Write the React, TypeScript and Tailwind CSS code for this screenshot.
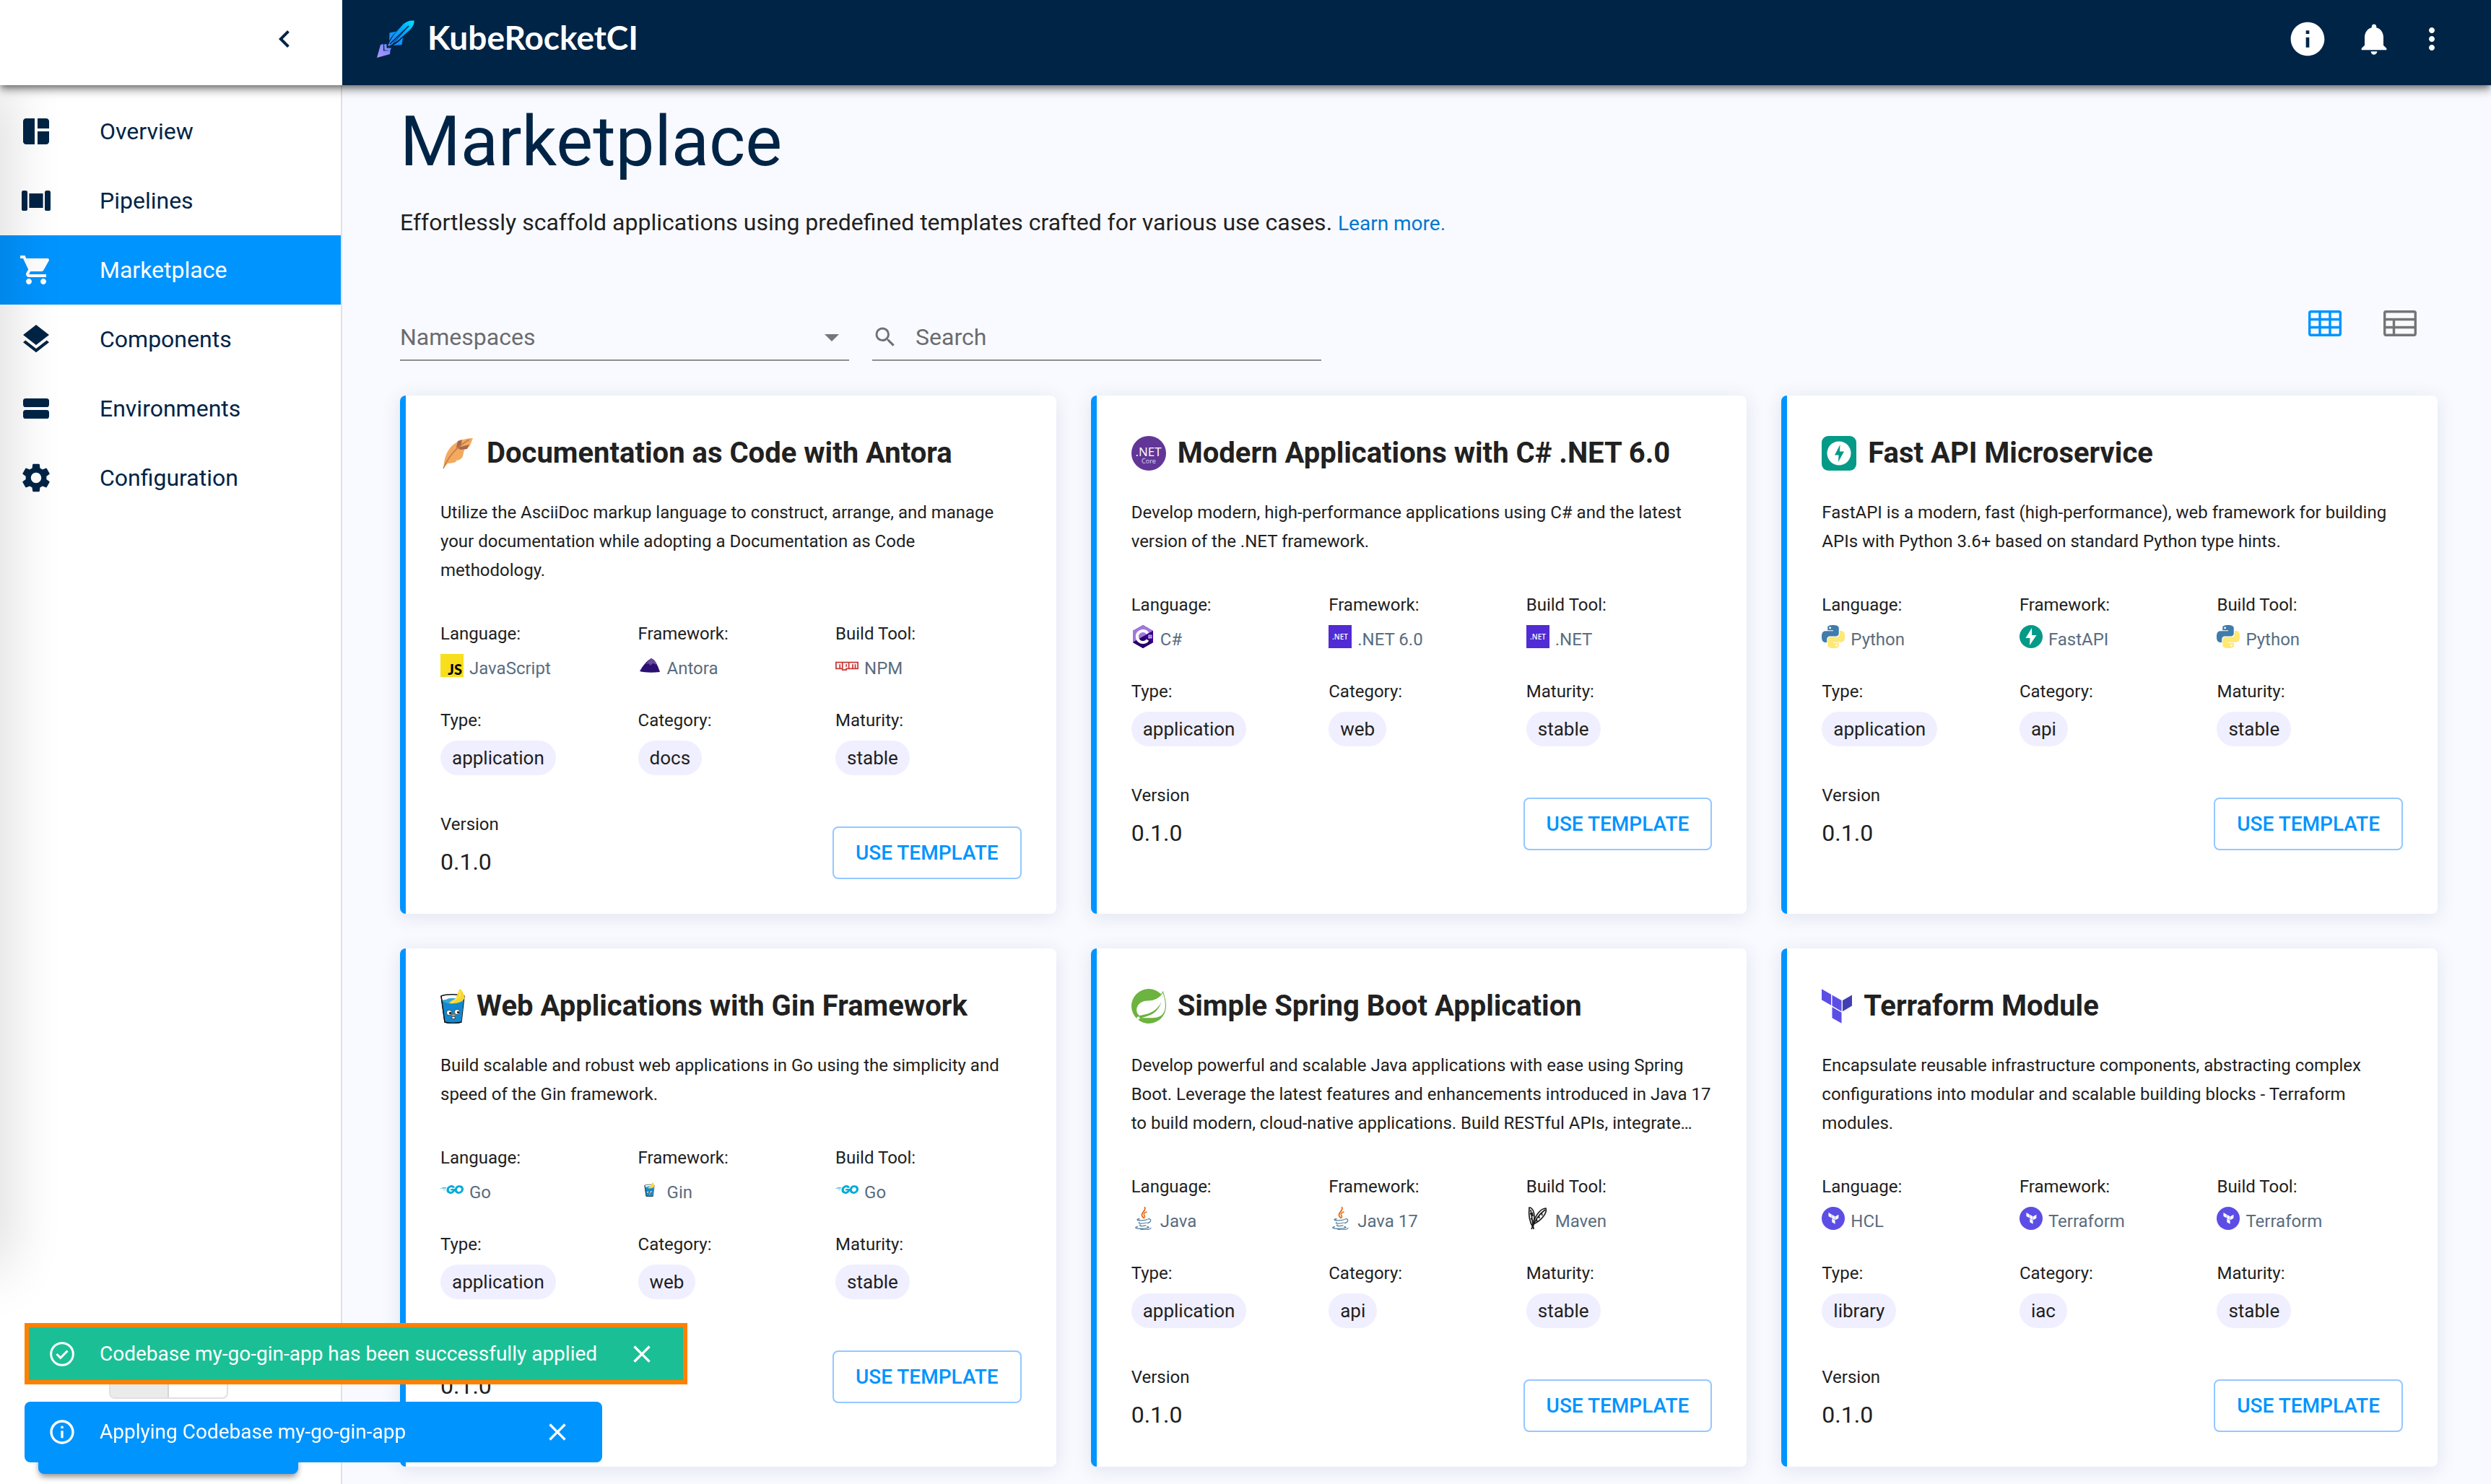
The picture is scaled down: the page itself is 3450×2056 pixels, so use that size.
import type { ReactNode } from "react";
import {
  MdInfo,
  MdNotifications,
  MdMoreVert,
  MdShoppingCart,
  MdSettings,
  MdSearch,
  MdArrowDropDown,
  MdClose,
  MdOutlineInfo,
  MdKeyboardArrowLeft,
} from "react-icons/md";
import { SiGo, SiSpring } from "react-icons/si";
import { FaNpm } from "react-icons/fa";

const TERRAFORM_PATH =
  "M1.44 0v7.575l6.561 3.79V3.787zM8.72 4.23v7.575l6.561 3.787V8.018zm0 8.405v7.575L15.28 24v-7.578z";

function RocketLogo() {
  return (
    <svg className="size-[52px]" viewBox="0 0 52 52" aria-hidden="true">
      <defs>
        <linearGradient id="rocket" x1="0" y1="52" x2="52" y2="0" gradientUnits="userSpaceOnUse">
          <stop offset="0" stopColor="#b794f6" />
          <stop offset="0.28" stopColor="#7a8cff" />
          <stop offset="0.42" stopColor="#1a8cff" />
          <stop offset="0.7" stopColor="#00a6ff" />
          <stop offset="1" stopColor="#00e5ff" />
        </linearGradient>
      </defs>
      <g fill="url(#rocket)">
        <path d="M51.500 0.500C45 0 40 2 36 6L27 16C22 22 18 28 15.500 35L16.500 36C24 32 31 27 36 22L45 14C50 9 52 5 51.500 0.500Z" />
        <path d="M17.500 17.500L27 15.500C23 19.500 19.500 24 17 28.500Z" />
        <path d="M35 25L36 24.500L34.500 34L22.500 35C27 32 31.500 29 35 25Z" />
        <path d="M5 34L9 33V42.500L18.500 42L18 47L0 52Z" />
        <path d="M10 33.500L13.500 33V38.500L20 38.500L18.500 42L10.500 41.500Z" />
      </g>
      <path d="M44 8L18 33" stroke="#002446" strokeWidth="1.600" fill="none" />
      <path d="M42 10L22 33" stroke="#002446" strokeWidth="1" fill="none" />
    </svg>
  );
}

function OverviewIcon() {
  return (
    <svg viewBox="0 0 24 24" className="size-12" fill="currentColor" aria-hidden="true">
      <path d="M11 21H5c-1.100 0-2-.9-2-2V5c0-1.100.9-2 2-2h6v18zM13 21h6c1.100 0 2-.9 2-2v-7h-8v9zM21 10V5c0-1.100-.9-2-2-2h-6v7h8z" />
    </svg>
  );
}

function PipelinesIcon() {
  return (
    <svg viewBox="0 0 24 24" className="size-12" fill="currentColor" aria-hidden="true">
      <rect x="2" y="5" width="4" height="14" rx="1.300" />
      <rect x="7.200" y="7" width="9.600" height="10" />
      <rect x="18" y="5" width="4" height="14" rx="1.300" />
    </svg>
  );
}

function ComponentsIcon() {
  return (
    <svg viewBox="0 0 24 24" className="size-12" fill="currentColor" aria-hidden="true">
      <path d="M11.990 18.540l-7.370-5.730L3 14.070l9 7 9-7-1.630-1.270-7.380 5.740zM12 16l7.360-5.730L21 9l-9-7-9 7 1.630 1.270L12 16z" />
    </svg>
  );
}

function EnvironmentsIcon() {
  return (
    <svg viewBox="0 0 24 24" className="size-12" fill="currentColor" aria-hidden="true">
      <rect x="3" y="5" width="18" height="6" rx="1.800" />
      <rect x="3" y="13" width="18" height="6" rx="1.800" />
    </svg>
  );
}

function GridViewIcon() {
  return (
    <svg viewBox="0 0 46 36" className="h-9 w-[46px]" fill="none" stroke="currentColor" strokeWidth="3.400" aria-hidden="true">
      <rect x="1.700" y="1.700" width="42.600" height="32.600" rx="2" />
      <path d="M1.500 12.500H44.500M1.500 23.500H44.500M16 1.500V34.500M30 1.500V34.500" />
    </svg>
  );
}

function TableViewIcon() {
  return (
    <svg viewBox="0 0 46 36" className="h-9 w-[46px]" fill="none" stroke="currentColor" strokeWidth="3.400" aria-hidden="true">
      <rect x="1.700" y="1.700" width="42.600" height="32.600" rx="2" />
      <path d="M1.500 12.500H44.500M1.500 23.500H44.500M14.500 12.500V34.500" />
    </svg>
  );
}

function FeatherIcon() {
  return (
    <svg viewBox="0 0 48 48" className="size-12" aria-hidden="true">
      <path d="M45 3C33 3 20 8 13 17C7 25 5 33 4.500 44L10 38C15 38 20 37 23 35L20 34C26 34 29 32 31 28L33 19C36 18 39 16 41 13Z" fill="#f3aa60" />
      <path d="M24 7L30 5L28 15L40 12L37 18L28 19L22 16Z" fill="#a9674a" />
      <path d="M40 5C24 14 12 26 4 45" stroke="#c27c48" strokeWidth="1.500" fill="none" />
    </svg>
  );
}

function GinGlass({ className }: { className: string }) {
  return (
    <svg viewBox="0 0 34 48" className={className} aria-hidden="true">
      <path d="M1 10C8 7 25 7 33 10L29 46C22 48 12 48 6 46Z" fill="#fff" stroke="#111" strokeWidth="1.400" />
      <path d="M2 16C10 14 24 14 32 15L29 46C22 48 12 48 6 46Z" fill="#1288cf" />
      <path d="M3 17C10 22 24 22 31 17L31.500 13H12Z" fill="#35a7d8" />
      <path d="M12 20C15 15 19 16 22 12C24 6 25 3 27 0C31 3 33 8 33.500 13C31 18 22 21 12 20Z" fill="#fbd52a" />
      <path d="M15 19C20 18 21 13 26 12M27 3V11" stroke="#fff3a0" strokeWidth="1" fill="none" />
      <path d="M1 10L6 46C12 48 22 48 29 46" fill="none" stroke="#111" strokeWidth="1.400" />
      <circle cx="12" cy="33" r="3.600" fill="#fff" stroke="#111" strokeWidth=".6" />
      <circle cx="23" cy="32" r="3.600" fill="#fff" stroke="#111" strokeWidth=".6" />
      <circle cx="13.500" cy="33.500" r="1.500" />
      <circle cx="24.500" cy="32.500" r="1.500" />
      <ellipse cx="18" cy="36.500" rx="2.600" ry="1.600" fill="#c98a4b" />
      <path d="M16 38.500h4v3h-4z" fill="#fff" stroke="#111" strokeWidth=".6" />
    </svg>
  );
}

function NetCoreIcon() {
  return (
    <svg viewBox="0 0 48 48" className="size-12" aria-hidden="true">
      <circle cx="24" cy="24" r="24" fill="#623697" />
      <text x="23.500" y="28" fill="#fff" fontFamily="Open Sans, sans-serif" fontSize="17" textAnchor="middle">.NET</text>
      <text x="24" y="38" fill="#e5d9f3" fontFamily="Open Sans, sans-serif" fontSize="9" textAnchor="middle">Core</text>
    </svg>
  );
}

function FastApiTile() {
  return (
    <svg viewBox="0 0 48 48" className="size-12" aria-hidden="true">
      <rect width="48" height="48" rx="9" fill="#059a87" />
      <circle cx="24" cy="24" r="16.500" fill="#fff" />
      <path d="M25.500 12L18 26.500h5.500L23 36l8-14.500h-6z" fill="#059a87" />
    </svg>
  );
}

function FastApiIcon() {
  return (
    <svg viewBox="0 0 32 32" className="size-8" aria-hidden="true">
      <circle cx="16" cy="16" r="16" fill="#059a87" />
      <path d="M17 4L8.500 18h6L14 28l9.500-14h-6.300z" fill="#fff" />
    </svg>
  );
}

function TerraformTile() {
  return (
    <svg viewBox="1.440 0 21.120 24" className="h-12 w-[42px]" aria-hidden="true">
      <path d={TERRAFORM_PATH} fill="#5c4ee5" />
      <path d="M22.560 4.227l-6.561 3.791v7.574l6.560-3.787z" fill="#4040b2" />
    </svg>
  );
}

function TerraformIcon() {
  return (
    <svg viewBox="0 0 32 32" className="size-8" aria-hidden="true">
      <circle cx="16" cy="16" r="16" fill="#5c4ee5" />
      <g transform="translate(8.500 8) scale(.66)" fill="#fff">
        <path d={TERRAFORM_PATH} />
        <path d="M22.560 4.227l-6.561 3.791v7.574l6.560-3.787z" />
      </g>
    </svg>
  );
}

function JavaScriptIcon() {
  return (
    <svg viewBox="0 0 32 32" className="size-8" aria-hidden="true">
      <rect width="32" height="32" fill="#f7df1e" />
      <text x="30" y="29" textAnchor="end" fontFamily="Lato, sans-serif" fontWeight="900" fontSize="20">JS</text>
    </svg>
  );
}

function AntoraIcon() {
  return (
    <svg viewBox="0 0 32 32" className="size-8" aria-hidden="true">
      <path d="M2 24C6 17 11 10 18 6C21 7 24 10 26 15C28 19 29 22 30 25C20 26 9 26 2 24Z" fill="#2c0f72" />
      <path d="M10 14L18 6C21 8 24 11 26 15L20 13L17 16L14 13Z" fill="#6a4a9c" />
    </svg>
  );
}

function NpmIcon() {
  return <FaNpm className="size-8 text-[#cb3837]" aria-hidden="true" />;
}

function CSharpIcon() {
  return (
    <svg viewBox="0 0 32 32" className="size-8" aria-hidden="true">
      <path d="M16 0L30 8V24L16 32L2 24V8Z" fill="#280068" />
      <path d="M16 0L30 8L2 24V8Z" fill="#a179dc" />
      <path d="M2 24L16 16L30 24L16 32Z" fill="#280068" />
      <path d="M30 8V24L16 16Z" fill="#390091" />
      <path d="M22.500 11.500A8 8 0 1 0 22.500 20.500" fill="none" stroke="#fff" strokeWidth="4" />
      <path d="M24.500 13v6M27 13v6M23 15h6M23 17.300h6" stroke="#fff" strokeWidth=".8" />
    </svg>
  );
}

function DotNetIcon() {
  return (
    <svg viewBox="0 0 32 32" className="size-8" aria-hidden="true">
      <rect width="32" height="32" fill="#512bd4" />
      <text x="16" y="20" fill="#fff" fontFamily="Open Sans, sans-serif" fontWeight="600" fontSize="10" textAnchor="middle">.NET</text>
    </svg>
  );
}

function PythonIcon() {
  return (
    <svg viewBox="0 0 24 24" className="size-8" aria-hidden="true">
      <path
        fill="#3f7cac"
        d="M14.25.18l.9.2.73.26.59.3.45.32.34.34.25.34.16.33.1.3.04.26.02.2-.01.13V8.5l-.05.63-.13.55-.21.46-.26.38-.3.31-.33.25-.35.19-.35.14-.33.1-.3.07-.26.04-.21.02H8.77l-.69.05-.59.14-.5.22-.41.27-.33.32-.27.35-.2.36-.15.37-.1.35-.07.32-.04.27-.02.21v3.06H3.17l-.21-.03-.28-.07-.32-.12-.35-.18-.36-.26-.36-.36-.35-.46-.32-.59-.28-.73-.21-.88-.14-1.05-.05-1.23.06-1.22.16-1.04.24-.87.32-.71.36-.57.4-.44.42-.33.42-.24.4-.16.36-.1.32-.05.24-.01h.16l.06.01h8.16v-.83H6.18l-.01-2.75-.02-.37.05-.34.11-.31.17-.28.25-.26.31-.23.38-.2.44-.18.51-.15.58-.12.64-.1.71-.06.77-.04.84-.02 1.27.05zm-6.3 1.98l-.23.33-.08.41.08.41.23.34.33.22.41.09.41-.09.33-.22.23-.34.08-.41-.08-.41-.23-.33-.33-.22-.41-.09-.41.09z"
      />
      <path
        fill="#ffe873"
        d="M21.1 6.11l.28.06.32.12.35.18.36.27.36.35.35.47.32.59.28.73.21.88.14 1.04.05 1.23-.06 1.23-.16 1.04-.24.86-.32.71-.36.57-.4.45-.42.33-.42.24-.4.16-.36.09-.32.05-.24.02-.16-.01h-8.22v.82h5.84l.01 2.76.02.36-.05.34-.11.31-.17.29-.25.25-.31.24-.38.2-.44.17-.51.15-.58.13-.64.09-.71.07-.77.04-.84.01-1.27-.04-1.07-.14-.9-.2-.73-.25-.59-.3-.45-.33-.34-.34-.25-.34-.16-.33-.1-.3-.04-.25-.02-.2.01-.13v-5.34l.05-.64.13-.54.21-.46.26-.38.3-.32.33-.24.35-.2.35-.14.33-.1.3-.06.26-.04.21-.02.13-.01h5.84l.69-.05.59-.14.5-.21.41-.28.33-.32.27-.35.2-.36.15-.36.1-.35.07-.32.04-.28.02-.21V6.07h2.09l.14.01zm-6.47 14.25l-.23.33-.08.41.08.41.23.33.33.23.41.08.41-.08.33-.23.23-.33.08-.41-.08-.41-.23-.33-.33-.23-.41-.08-.41.08z"
      />
    </svg>
  );
}

function JavaIcon() {
  return (
    <svg viewBox="0 0 32 32" className="size-8" fill="none" strokeLinecap="round" aria-hidden="true">
      <path d="M18.500 0.500C21 6 12 8 15 13C15.500 14 16.500 15 16.500 15" stroke="#ea6a12" strokeWidth="1.800" />
      <path d="M21 7C17 8.500 16.500 10 18 12C19 13.500 18.500 14.500 17.500 15.500" stroke="#ea6a12" strokeWidth="1.500" />
      <g stroke="#5382a1" strokeWidth="1.300">
        <path d="M11 16.500C5 18 9 19 14 18.800C18 18.700 21 18 22 17.500" />
        <path d="M23 17C28 15.500 28 21 22.500 22.500" />
        <path d="M11 21.500C8.500 23 14 24 21 22" />
        <path d="M12 25C10 26.500 15 27.300 20 25.700" />
        <path d="M8.500 27.500C2 29 8 30.500 15 30.200C22 30 27 28.500 22 27.500" />
        <path d="M13 31.500C19 32 26 31.500 27 29.500" />
      </g>
    </svg>
  );
}

function MavenIcon() {
  return (
    <svg viewBox="0 0 32 32" className="size-8" fill="none" stroke="#1b1b1b" strokeWidth="1.700" aria-hidden="true">
      <path d="M9 28C4 20 3 10 4 1C9 1 11 8 11 14C11 19 10 23 9 28Z" />
      <path d="M6 4L10 31M5 9l3 3M8 8l1 5M6 16l3 3" />
      <path d="M9 24C12 12 20 2 27 2C29 8 22 18 10 24Z" />
      <path d="M26 4C18 10 11 20 7 31M17 12l1 4M21 8l1 4M14 17l1 4" />
    </svg>
  );
}

function GoIcon() {
  return <SiGo className="size-8 text-[#00acd7]" aria-hidden="true" />;
}

function GinIcon() {
  return (
    <span className="flex size-8 items-center justify-center">
      <GinGlass className="h-5 w-[15px]" />
    </span>
  );
}

type Stack = { name: string; icon: ReactNode };

type Template = {
  title: string;
  icon: ReactNode;
  description: string;
  language: Stack;
  framework: Stack;
  buildTool: Stack;
  type: string;
  category: string;
  maturity: string;
};

const templates: Template[] = [
  {
    title: "Documentation as Code with Antora",
    icon: <FeatherIcon />,
    description:
      "Utilize the AsciiDoc markup language to construct, arrange, and manage your documentation while adopting a Documentation as Code methodology.",
    language: { name: "JavaScript", icon: <JavaScriptIcon /> },
    framework: { name: "Antora", icon: <AntoraIcon /> },
    buildTool: { name: "NPM", icon: <NpmIcon /> },
    type: "application",
    category: "docs",
    maturity: "stable",
  },
  {
    title: "Modern Applications with C# .NET 6.0",
    icon: <NetCoreIcon />,
    description:
      "Develop modern, high-performance applications using C# and the latest version of the .NET framework.",
    language: { name: "C#", icon: <CSharpIcon /> },
    framework: { name: ".NET 6.0", icon: <DotNetIcon /> },
    buildTool: { name: ".NET", icon: <DotNetIcon /> },
    type: "application",
    category: "web",
    maturity: "stable",
  },
  {
    title: "Fast API Microservice",
    icon: <FastApiTile />,
    description:
      "FastAPI is a modern, fast (high-performance), web framework for building APIs with Python 3.6+ based on standard Python type hints.",
    language: { name: "Python", icon: <PythonIcon /> },
    framework: { name: "FastAPI", icon: <FastApiIcon /> },
    buildTool: { name: "Python", icon: <PythonIcon /> },
    type: "application",
    category: "api",
    maturity: "stable",
  },
  {
    title: "Web Applications with Gin Framework",
    icon: <GinGlass className="h-12 w-[34px]" />,
    description:
      "Build scalable and robust web applications in Go using the simplicity and speed of the Gin framework.",
    language: { name: "Go", icon: <GoIcon /> },
    framework: { name: "Gin", icon: <GinIcon /> },
    buildTool: { name: "Go", icon: <GoIcon /> },
    type: "application",
    category: "web",
    maturity: "stable",
  },
  {
    title: "Simple Spring Boot Application",
    icon: <SiSpring className="size-12 text-[#6db33f]" aria-hidden="true" />,
    description:
      "Develop powerful and scalable Java applications with ease using Spring Boot. Leverage the latest features and enhancements introduced in Java 17 to build modern, cloud-native applications. Build RESTful APIs, integrate…",
    language: { name: "Java", icon: <JavaIcon /> },
    framework: { name: "Java 17", icon: <JavaIcon /> },
    buildTool: { name: "Maven", icon: <MavenIcon /> },
    type: "application",
    category: "api",
    maturity: "stable",
  },
  {
    title: "Terraform Module",
    icon: <TerraformTile />,
    description:
      "Encapsulate reusable infrastructure components, abstracting complex configurations into modular and scalable building blocks - Terraform modules.",
    language: { name: "HCL", icon: <TerraformIcon /> },
    framework: { name: "Terraform", icon: <TerraformIcon /> },
    buildTool: { name: "Terraform", icon: <TerraformIcon /> },
    type: "library",
    category: "iac",
    maturity: "stable",
  },
];

const navItems = [
  { label: "Overview", icon: <OverviewIcon /> },
  { label: "Pipelines", icon: <PipelinesIcon /> },
  { label: "Marketplace", icon: <MdShoppingCart className="size-12" aria-hidden="true" />, active: true },
  { label: "Components", icon: <ComponentsIcon /> },
  { label: "Environments", icon: <EnvironmentsIcon /> },
  { label: "Configuration", icon: <MdSettings className="size-12" aria-hidden="true" /> },
];

function StackField({ label, value }: { label: string; value: Stack }) {
  return (
    <div className="flex flex-col gap-2">
      <dt>{label}:</dt>
      <dd className="flex items-start gap-2 text-[#596d80]">
        {value.icon}
        <span>{value.name}</span>
      </dd>
    </div>
  );
}

function ChipField({ label, value }: { label: string; value: string }) {
  return (
    <div className="flex flex-col items-start gap-2">
      <dt>{label}:</dt>
      <dd className="flex h-12 items-center rounded-full bg-[#f0efff] px-4 text-[26px]">{value}</dd>
    </div>
  );
}

function TemplateCard({ template }: { template: Template }) {
  return (
    <article className="rounded-lg border-l-8 border-[#0094ff] bg-white p-12 text-[24px] leading-10 text-[#212121] shadow-[0_4px_24px_2px_rgba(40,60,130,0.10)]">
      <div className="flex h-16 items-center gap-4">
        {template.icon}
        <h2 className="text-[40px] font-bold leading-[64px] whitespace-nowrap">{template.title}</h2>
      </div>
      <p className="mt-[30px]">{template.description}</p>
      <dl className="mt-12 grid grid-cols-3 gap-x-4 gap-y-8">
        <StackField label="Language" value={template.language} />
        <StackField label="Framework" value={template.framework} />
        <StackField label="Build Tool" value={template.buildTool} />
        <ChipField label="Type" value={template.type} />
        <ChipField label="Category" value={template.category} />
        <ChipField label="Maturity" value={template.maturity} />
      </dl>
      <div className="mt-12 flex items-end justify-between">
        <div>
          <p>Version</p>
          <p className="mt-2 text-[32px] leading-[48px]">0.1.0</p>
        </div>
        <button
          type="button"
          className="rounded-lg border-2 border-[#94c8ff] px-[30px] py-[10px] text-[28px] font-medium leading-[49px] text-[#0094ff]"
        >
          USE TEMPLATE
        </button>
      </div>
    </article>
  );
}

function Sidebar() {
  return (
    <aside className="relative flex w-[474px] shrink-0 flex-col overflow-hidden border-r-2 border-[#e0e0e5] bg-white">
      <nav className="pt-4" aria-label="Main">
        {navItems.map((item) => (
          <a
            key={item.label}
            href="#"
            aria-current={item.active ? "page" : undefined}
            className={
              item.active
                ? "flex h-24 items-center gap-16 bg-[#0094ff] px-[26px] text-[32px] text-white"
                : "flex h-24 items-center gap-16 px-[26px] text-[32px] text-[#002446]"
            }
          >
            {item.icon}
            {item.label}
          </a>
        ))}
      </nav>
      <div className="mt-auto flex flex-col items-center gap-8 pr-[59px] pb-[14px] pl-[53px]">
        <div className="flex h-14 w-[165px] overflow-hidden rounded-lg border-2 border-[#e0e0e0]">
          <button type="button" aria-label="Light theme" className="flex-1 border-r-2 border-[#d5d5d5] bg-[#ebebeb]" />
          <button type="button" aria-label="Dark theme" className="flex-1" />
        </div>
        <button
          type="button"
          aria-label="Add cluster"
          className="h-[72px] w-full rounded-lg bg-[#0094ff] shadow-[0_6px_8px_-2px_rgba(0,0,0,0.35),0_2px_10px_rgba(0,0,0,0.15)]"
        />
      </div>
      <div
        className="pointer-events-none absolute top-0 bottom-[300px] -left-10 w-10 shadow-[0_0_80px_rgba(0,0,0,0.24)]"
        aria-hidden="true"
      />
    </aside>
  );
}

function Header() {
  return (
    <header className="relative z-10 flex h-[118px] shadow-[0_4px_8px_-2px_rgba(0,0,0,0.4),0_8px_10px_rgba(0,0,0,0.2),0_2px_20px_rgba(0,0,0,0.2)]">
      <div className="flex w-[474px] shrink-0 items-start justify-end bg-white pt-[30px] pr-14 text-[#002446]">
        <button type="button" aria-label="Collapse menu">
          <MdKeyboardArrowLeft className="size-12" />
        </button>
      </div>
      <div className="flex flex-1 items-start justify-between bg-[#002446] pt-[26px] pr-[58px] pl-12 text-white">
        <a href="#" className="flex h-14 items-center gap-[18px]">
          <RocketLogo />
          <span className="pb-1 font-['Lato'] text-[46px] font-bold leading-[52px]">KubeRocketCI</span>
        </a>
        <div className="flex h-14 items-center">
          <button type="button" aria-label="About" className="mr-[38px]">
            <MdInfo className="size-14" />
          </button>
          <button type="button" aria-label="Notifications" className="mr-[30px]">
            <MdNotifications className="size-[52px]" />
          </button>
          <button type="button" aria-label="More">
            <MdMoreVert className="size-12" />
          </button>
        </div>
      </div>
    </header>
  );
}

function Filters() {
  return (
    <div className="mt-16 flex items-end justify-between">
      <div className="flex gap-8">
        <div className="relative flex w-[622px] items-center border-b-2 border-[#8d8e93]">
          <select
            aria-label="Namespaces"
            defaultValue=""
            className="h-[62px] w-full appearance-none bg-transparent text-[32px] text-[#6b6c70] outline-none"
          >
            <option value="">Namespaces</option>
          </select>
          <MdArrowDropDown className="pointer-events-none absolute right-0 size-12 text-[#75767a]" aria-hidden="true" />
        </div>
        <label className="flex w-[622px] items-center gap-6 border-b-2 border-[#8d8e93]">
          <MdSearch className="size-9 text-[#707175]" aria-hidden="true" />
          <input
            type="text"
            aria-label="Search"
            placeholder="Search"
            className="h-[62px] flex-1 bg-transparent text-[32px] outline-none placeholder:text-[#6b6c70]"
          />
        </label>
      </div>
      <div className="flex">
        <button type="button" aria-label="Grid view" className="flex size-[104px] items-center justify-center text-[#0094ff]">
          <GridViewIcon />
        </button>
        <button type="button" aria-label="Table view" className="flex size-[104px] items-center justify-center text-[#757575]">
          <TableViewIcon />
        </button>
      </div>
    </div>
  );
}

function Notifications() {
  return (
    <div className="fixed bottom-[30px] left-[34px] z-20 flex flex-col items-start gap-6 text-[28px] leading-10 text-white">
      <div role="status" className="flex h-[85px] w-[918px] items-center border-6 border-[#ff8000] bg-[#1bbf95] pr-[37px] pl-[26px]">
        <svg viewBox="0 0 24 24" className="size-10" fill="none" stroke="currentColor" strokeWidth="1.800" aria-hidden="true">
          <circle cx="12" cy="12" r="9.200" />
          <path d="M7.500 12L10.700 15.200L16.500 9.300" />
        </svg>
        <span className="ml-8">Codebase my-go-gin-app has been successfully applied</span>
        <button type="button" aria-label="Dismiss" className="ml-auto">
          <MdClose className="size-10" />
        </button>
      </div>
      <div role="status" className="flex h-[84px] w-[800px] items-center rounded-lg bg-[#0094ff] pr-[42px] pl-8">
        <MdOutlineInfo className="size-10" aria-hidden="true" />
        <span className="ml-8">Applying Codebase my-go-gin-app</span>
        <button type="button" aria-label="Dismiss" className="ml-auto">
          <MdClose className="size-10" />
        </button>
      </div>
    </div>
  );
}

export default function App() {
  return (
    <div className="flex h-screen flex-col overflow-hidden bg-[#f9faff] font-['Roboto',sans-serif] text-[#212121]">
      <Header />
      <div className="flex min-h-0 flex-1">
        <Sidebar />
        <main className="min-w-0 flex-1 overflow-hidden pt-[22px] pr-[74px] pl-20">
          <h1 className="text-[96px] leading-[112px] text-[#002446]">Marketplace</h1>
          <p className="mt-8 text-[32px] leading-[48px]">
            Effortlessly scaffold applications using predefined templates crafted for various use cases.{" "}
            <a href="#" className="text-[28px] leading-none text-[#0077d1]">
              Learn more.
            </a>
          </p>
          <Filters />
          <div className="mt-12 grid grid-cols-3 gap-12">
            {templates.map((template) => (
              <TemplateCard key={template.title} template={template} />
            ))}
          </div>
        </main>
      </div>
      <Notifications />
    </div>
  );
}
